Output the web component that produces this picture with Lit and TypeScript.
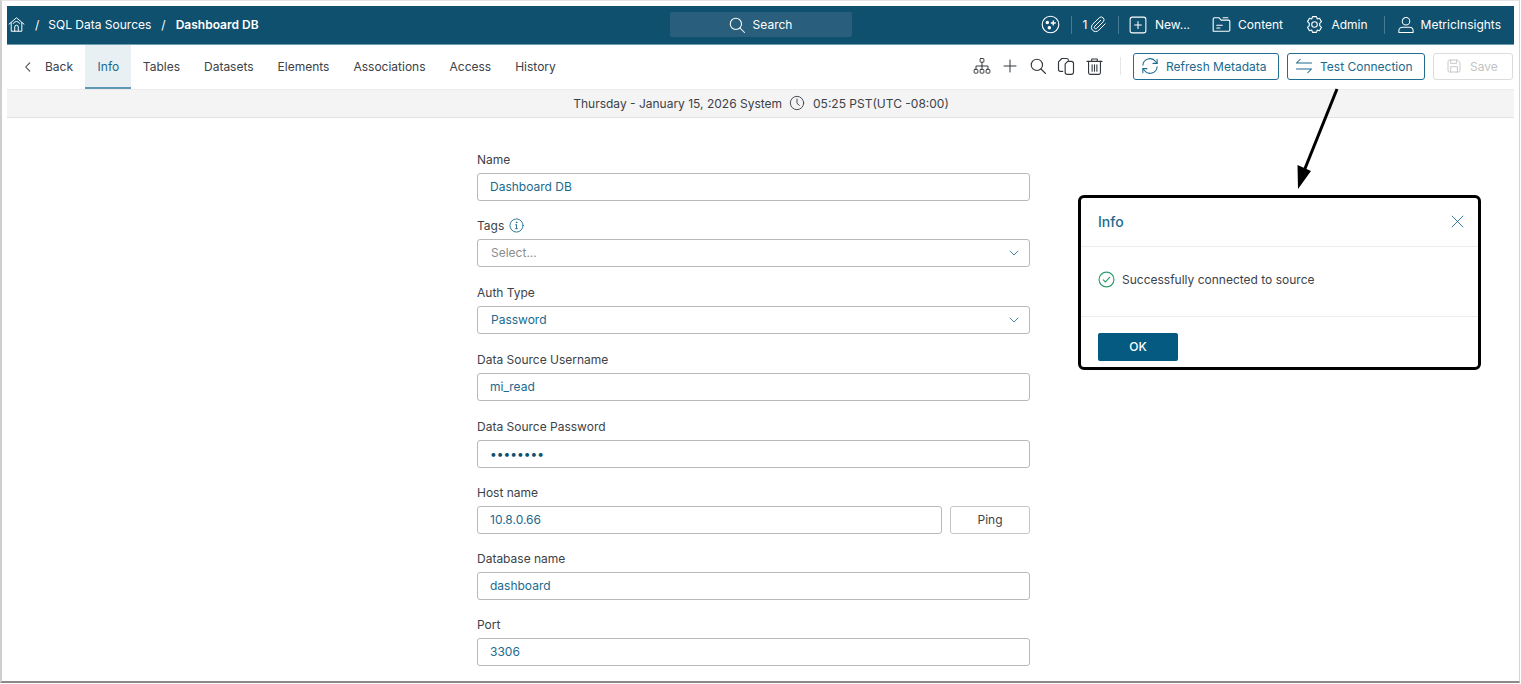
import { LitElement, html, css, svg } from "lit";
import { customElement } from "lit/decorators.js";

const ic = (w: number, body: unknown, sw = 1.4) => html`<svg class="ic" width=${w} height=${w} viewBox="0 0 24 24" fill="none" stroke="currentColor" stroke-width=${sw} stroke-linecap="round" stroke-linejoin="round">${body}</svg>`;

const icons = {
  home: svg`<path d="M1.500 11.500 12 2.500l10.500 9"/><path d="M4.500 9.500V21.500h15V9.500"/><path d="M9.500 21.500v-6a2.500 2.500 0 0 1 5 0v6"/><path d="M7.500 10.500a5 5 0 0 1 9 0"/>`,
  search: svg`<circle cx="10.500" cy="10.500" r="7.500"/><path d="m16 16 6 6"/>`,
  spark: svg`<circle cx="12" cy="12" r="10.500"/><circle cx="8" cy="9.500" r="1.500" fill="currentColor"/><path d="M15.500 7.500v5M13 10h5" stroke-width="1.800"/><circle cx="10.500" cy="16" r="1.500" fill="currentColor"/>`,
  clip: svg`<path d="M21.440 11.050l-9.190 9.190a6 6 0 0 1-8.490-8.490l9.190-9.190a4 4 0 0 1 5.660 5.660l-9.200 9.190a2 2 0 0 1-2.830-2.830l8.490-8.480"/>`,
  plusBox: svg`<rect x="1.500" y="1.500" width="21" height="21" rx="3"/><path d="M12 7.500v9M7.500 12h9"/>`,
  folder: svg`<path d="M1.500 20.500V5a1.500 1.500 0 0 1 1.500-1.500h6l2.500 3H21A1.500 1.500 0 0 1 22.500 8v11a1.500 1.500 0 0 1-1.500 1.500Z"/><path d="M6 13h7M6 16.500h4"/><path d="M14 3.500h6"/>`,
  gear: svg`<path d="M9.500 2h5l.9 3 2.900-.9 2.500 4.300-2.200 2.100v3l2.200 2.100-2.500 4.300-2.900-.9-.9 3h-5l-.9-3-2.900.9-2.500-4.300 2.200-2.100v-3L3.200 8.400l2.500-4.300 2.900.9Z"/><circle cx="12" cy="12" r="3.500"/>`,
  user: svg`<circle cx="12" cy="7" r="5"/><path d="M2.500 22v-2.500c0-3 2.500-4.500 5-4.500h9c2.500 0 5 1.500 5 4.500V22Z"/>`,
  back: svg`<path d="m15 5-7 7 7 7"/>`,
  tree: svg`<rect x="9.500" y="2" width="5" height="5" rx="1"/><path d="M12 7v5M4 16v-4h16v4M12 12v4"/><rect x="1.500" y="16.500" width="5" height="5" rx="1"/><rect x="9.500" y="16.500" width="5" height="5" rx="1"/><rect x="17.500" y="16.500" width="5" height="5" rx="1"/>`,
  plus: svg`<path d="M12 3v18M3 12h18"/>`,
  copy: svg`<path d="M8 18.500H5.500A2.500 2.500 0 0 1 3 16V7l4-4h5.500A2.500 2.500 0 0 1 15 5"/><path d="M11 9.500 14 6.500h4.500A2.500 2.500 0 0 1 21 9v10.500a2.500 2.500 0 0 1-2.500 2.500h-5a2.500 2.500 0 0 1-2.500-2.500Z"/>`,
  trash: svg`<path d="M2.500 5.500h19M8.500 5.500V2.500h7v3"/><path d="M4.500 5.500V20a2 2 0 0 0 2 2h11a2 2 0 0 0 2-2V5.500"/><path d="M9 10v8M12 10v8M15 10v8"/>`,
  refresh: svg`<path d="M2.500 11a9.500 9.500 0 0 1 17-5l2 2.500"/><path d="M21.500 3v5.500H16"/><path d="M21.500 13a9.500 9.500 0 0 1-17 5l-2-2.500"/><path d="M2.500 21v-5.500H8"/>`,
  swap: svg`<path d="M22 8H2l5-5"/><path d="M2 16h20l-5 5"/>`,
  save: svg`<path d="M3 5a2 2 0 0 1 2-2h12l4 4v12a2 2 0 0 1-2 2H5a2 2 0 0 1-2-2Z"/><path d="M7 3v5h9V3M7 21v-8h10v8"/>`,
  clock: svg`<circle cx="12" cy="12" r="10"/><path d="M12 6v6.500l3.500 3"/>`,
  info: svg`<circle cx="12" cy="12" r="10.500"/><path d="M12 11v6M10.500 17h3M10.500 11H12"/><circle cx="12" cy="7" r=".6" fill="currentColor"/>`,
  chev: svg`<path d="m4 8 8 8 8-8"/>`,
  close: svg`<path d="m2 2 20 20M22 2 2 22"/>`,
  ok: svg`<circle cx="12" cy="12" r="10.500"/><path d="m7.500 12.500 3 3 6-6.500"/>`,
};

const tabs = ["Info", "Tables", "Datasets", "Elements", "Associations", "Access", "History"];

type Field = { label: string; value: string; h: number; kind?: string };
const fields: Field[] = [
  { label: "Name", value: "Dashboard DB", h: 66 },
  { label: "Tags", value: "Select...", h: 67, kind: "tags" },
  { label: "Auth Type", value: "Password", h: 67, kind: "select" },
  { label: "Data Source Username", value: "mi_read", h: 67 },
  { label: "Data Source Password", value: "••••••••", h: 66, kind: "pass" },
  { label: "Host name", value: "10.8.0.66", h: 66, kind: "ping" },
  { label: "Database name", value: "dashboard", h: 66 },
  { label: "Port", value: "3306", h: 46 },
];

@customElement("app-root")
export class AppRoot extends LitElement {
  static styles = css`
    :host { display: block; height: 684px; overflow: hidden; background: #fff; font-family: Inter, "Noto Sans", sans-serif; font-size: 12px; color: #3c4248; }
    * { box-sizing: border-box; }
    .ic { display: block; flex: none; }
    .frame { position: relative; width: 1520px; height: 683px; padding: 5px 5px 0 5px; border-top: 1px solid #e4e4e4; border-left: 2px solid #cfcfcf; border-right: 1px solid #d4d4d4; border-bottom: 2px solid #8a8a8a; overflow: hidden; }
    .top { height: 39px; padding-bottom: 1px; background: #10506f; border-bottom: 1px solid #6f9db3; color: #fff; display: grid; grid-template-columns: 1fr 182px 1fr; align-items: center; }
    .crumbs { display: flex; align-items: center; padding-left: 1px; }
    .crumbs .sep { margin: 0 9px 0 10px; }
    .crumbs .sep2 { margin: 0 10px 0 10px; }
    .crumbs b { font-weight: 600; }
    .search { height: 25px; background: #295f7c; border-radius: 2px; display: flex; align-items: center; justify-content: center; gap: 7px; padding-right: 1px; }
    .tools { display: flex; align-items: center; justify-content: flex-end; padding-right: 13px; }
    .vr { width: 1px; height: 18px; background: #477a93; }
    .t1 { margin: 0 10.5px 0 11px; }
    .t2 { margin: 0 10px 0 10.5px; }
    .t3 { margin: 0 12px 0 16px; }
    .clip { margin-left: 3px; }
    .l6 { margin-left: 6px; }
    .l7 { margin-left: 7px; }
    .l75 { margin-left: 7.5px; }
    .l8 { margin-left: 8px; }
    .g22 { margin-left: 22px; }
    .bar { height: 44px; display: flex; align-items: stretch; }
    .backbtn { display: flex; align-items: center; padding: 0 0 1px 14px; width: 78px; gap: 10px; }
    .tab { display: flex; align-items: center; padding: 0 12px 1px; }
    .tab.on { padding: 0 11.6px 0 12.600px; background: #e8f0f4; color: #1a6a8e; border-bottom: 2px solid #5f98b4; }
    .actions { margin-left: auto; display: flex; align-items: center; padding-bottom: 2px; color: #33383d; }
    .act { width: 28px; display: flex; justify-content: center; }
    .vr2 { width: 1px; height: 18px; background: #e6e6e6; margin: 0 12px 0 12px; }
    .btn { height: 27px; border: 1px solid #1f6d90; border-radius: 3px; color: #1a6a8e; display: flex; align-items: center; gap: 7px; padding-left: 7px; background: #fff; }
    .btn.a { width: 146px; }
    .btn.b { width: 138px; margin-left: 8px; }
    .btn.c { width: 80px; margin-left: 8px; border-color: #dcdcdc; color: #c4c4c4; margin-right: 1px; padding-left: 12px; gap: 8px; }
    .date { height: 29px; padding-bottom: 1px; background: #f4f4f4; border-top: 1px solid #ececec; border-bottom: 1px solid #e3e3e3; display: flex; align-items: center; justify-content: center; gap: 7px; padding-left: 1px; }
    .date span:last-child { margin-left: 1px; }
    form { width: 553px; margin: 30.5px 0 0 470px; }
    .field { padding-top: 2px; }
    .label { height: 18px; line-height: 18px; display: flex; align-items: center; gap: 5px; margin-bottom: 4px; }
    .input { height: 28px; border: 1px solid #b9b9b9; border-radius: 3px; color: #1a6a8e; padding: 0 12px; display: flex; align-items: center; justify-content: space-between; flex: 1; background: #fff; }
    .input.sel { padding: 0 9px 0 13px; }
    .input.ph { color: #8c8c8c; }
    .input.pass { color: #10506f; }
    .row { display: flex; gap: 8px; }
    .ping { width: 80px; height: 28px; border: 1px solid #c6c6c6; border-radius: 3px; display: flex; align-items: center; justify-content: center; }
    .info-ic { color: #1a6a8e; }
    .chev { color: #1a6a8e; }
    .modal { position: absolute; left: 1076px; top: 194px; width: 403px; height: 175px; background: #fff; border: 3px solid #000; border-radius: 6px; display: flex; flex-direction: column; }
    .mhead { height: 49px; padding: 0 14px 2px 17px; border-bottom: 1px solid #ececec; display: flex; align-items: center; justify-content: space-between; color: #1a6a8e; font-size: 14px; font-weight: 500; }
    .mbody { height: 70px; border-bottom: 1px solid #ececec; padding: 0 17px 5px; display: flex; align-items: center; gap: 7px; }
    .ok-ic { color: #2e9e6b; }
    .mfoot { padding: 16px 17px 0; }
    .okbtn { width: 80px; height: 28px; padding-bottom: 1px; background: #045a80; color: #fff; border-radius: 2px; display: flex; align-items: center; justify-content: center; font-weight: 500; }
    .arrow { position: absolute; left: 1280px; top: 80px; }
  `;

  render() {
    return html`<div class="frame">
      <header class="top">
        <div class="crumbs">${ic(17, icons.home)}<span class="sep">/</span><span>SQL Data Sources</span><span class="sep2">/</span><b>Dashboard DB</b></div>
        <div class="search">${ic(18, icons.search)}<span>Search</span></div>
        <div class="tools">
          ${ic(19, icons.spark)}<i class="vr t1"></i><span>1</span><span class="clip">${ic(17, icons.clip)}</span><i class="vr t2"></i>
          ${ic(18, icons.plusBox)}<span class="l8">New...</span>
          <span class="g22">${ic(19, icons.folder)}</span><span class="l7">Content</span>
          <span class="g22">${ic(19, icons.gear)}</span><span class="l75">Admin</span><i class="vr t3"></i>
          ${ic(18, icons.user)}<span class="l6">MetricInsights</span>
        </div>
      </header>
      <nav class="bar">
        <div class="backbtn">${ic(14, icons.back, 1.8)}<span>Back</span></div>
        ${tabs.map((t, i) => html`<div class="tab ${i === 0 ? "on" : ""}">${t}</div>`)}
        <div class="actions">
          <span class="act">${ic(18, icons.tree, 1.3)}</span>
          <span class="act">${ic(16, icons.plus, 1.5)}</span>
          <span class="act">${ic(18, icons.search, 1.5)}</span>
          <span class="act">${ic(20, icons.copy, 1.4)}</span>
          <span class="act">${ic(19, icons.trash, 1.4)}</span>
          <i class="vr2"></i>
          <div class="btn a">${ic(18, icons.refresh)}<span>Refresh Metadata</span></div>
          <div class="btn b">${ic(18, icons.swap)}<span>Test Connection</span></div>
          <div class="btn c">${ic(16, icons.save)}<span>Save</span></div>
        </div>
      </nav>
      <div class="date"><span>Thursday - January 15, 2026 System</span>${ic(16, icons.clock)}<span>05:25 PST(UTC -08:00)</span></div>
      <form>
        ${fields.map((f) => html`<div class="field" style="height:${f.h}px">
          <div class="label">${f.label}${f.kind === "tags" ? html`<span class="info-ic">${ic(15, icons.info)}</span>` : ""}</div>
          <div class="row">
            <div class="input ${f.kind === "tags" ? "sel ph" : f.kind === "select" ? "sel" : f.kind === "pass" ? "pass" : ""}">
              <span>${f.value}</span>
              ${f.kind === "tags" || f.kind === "select" ? html`<span class="chev">${ic(12, icons.chev, 1.6)}</span>` : ""}
            </div>
            ${f.kind === "ping" ? html`<div class="ping">Ping</div>` : ""}
          </div>
        </div>`)}
      </form>
      <svg class="arrow" width="70" height="115" viewBox="0 0 70 115" fill="none">
        <path d="M55 8 L22 90" stroke="#000" stroke-width="3"/>
        <path d="M16 108 L15.5 84 L29 90 Z" fill="#000"/>
      </svg>
      <section class="modal">
        <div class="mhead"><span>Info</span>${ic(13, icons.close, 1.6)}</div>
        <div class="mbody"><span class="ok-ic">${ic(17, icons.ok, 1.6)}</span><span>Successfully connected to source</span></div>
        <div class="mfoot"><div class="okbtn">OK</div></div>
      </section>
    </div>`;
  }
}
